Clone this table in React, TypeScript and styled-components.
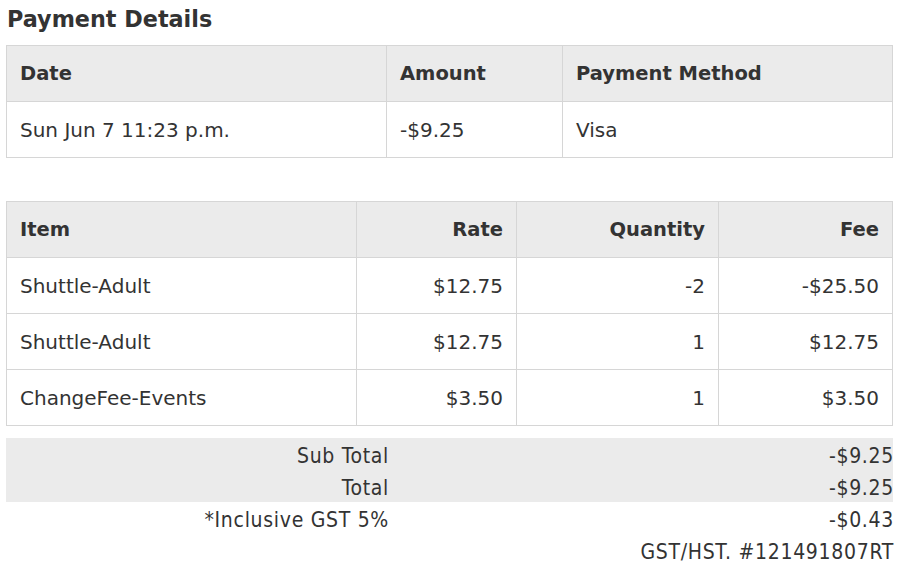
import React from 'react';
import styled, { createGlobalStyle } from 'styled-components';

const GlobalStyle = createGlobalStyle`
  body {
    margin: 0;
    padding: 0 9px 0 6px;
    background: #fff;
    font-family: "DejaVu Sans", Verdana, sans-serif;
    color: #333;
  }
`;

interface LineItem {
  item: string;
  rate: string;
  qty: string;
  fee: string;
}

const items: LineItem[] = [
  { item: 'Shuttle-Adult', rate: '$12.75', qty: '-2', fee: '-$25.50' },
  { item: 'Shuttle-Adult', rate: '$12.75', qty: '1', fee: '$12.75' },
  { item: 'ChangeFee-Events', rate: '$3.50', qty: '1', fee: '$3.50' },
];

const totals = [
  { label: 'Sub Total', value: '-$9.25', shaded: true },
  { label: 'Total', value: '-$9.25', shaded: true },
  { label: '*Inclusive GST 5%', value: '-$0.43', shaded: false },
];

const App: React.FC = () => {
  return (
    <Page>
      <GlobalStyle />
      <Title>Payment Details</Title>
      <Table>
        <colgroup>
          <col style={{ width: 380 }} />
          <col style={{ width: 176 }} />
          <col />
        </colgroup>
        <thead>
          <tr>
            <Th>Date</Th>
            <Th>Amount</Th>
            <Th>Payment Method</Th>
          </tr>
        </thead>
        <tbody>
          <tr>
            <Td>Sun Jun 7 11:23 p.m.</Td>
            <Td>-$9.25</Td>
            <Td>Visa</Td>
          </tr>
        </tbody>
      </Table>

      <ItemsTable>
        <colgroup>
          <col style={{ width: 350 }} />
          <col style={{ width: 160 }} />
          <col style={{ width: 202 }} />
          <col />
        </colgroup>
        <thead>
          <tr>
            <Th>Item</Th>
            <Th $right>Rate</Th>
            <Th $right>Quantity</Th>
            <Th $right>Fee</Th>
          </tr>
        </thead>
        <tbody>
          {items.map((row, i) => (
            <tr key={i}>
              <Td>{row.item}</Td>
              <Td $right>{row.rate}</Td>
              <Td $right>{row.qty}</Td>
              <Td $right>{row.fee}</Td>
            </tr>
          ))}
        </tbody>
      </ItemsTable>

      <Summary>
        {totals.map((t) => (
          <SumRow key={t.label} $shaded={t.shaded}>
            <SumLabel>{t.label}</SumLabel>
            <SumValue>{t.value}</SumValue>
          </SumRow>
        ))}
        <SumRow>
          <SumLabel />
          <SumValue>GST/HST. #121491807RT</SumValue>
        </SumRow>
      </Summary>
    </Page>
  );
};

const Page = styled.div`
  padding-top: 5px;
`;

const Title = styled.h2`
  margin: 0 0 12px 1px;
  font-size: 22.3px;
  font-weight: bold;
  line-height: 28px;
  color: #333;
`;

const Table = styled.table`
  width: 100%;
  border-collapse: collapse;
  table-layout: fixed;
  border: 1px solid #d6d6d6;
`;

const ItemsTable = styled(Table)`
  margin-top: 43px;
`;

const Th = styled.th<{ $right?: boolean }>`
  height: 56px;
  box-sizing: border-box;
  padding: 0 13px;
  background: #ebebeb;
  border: 1px solid #d6d6d6;
  text-align: ${(p) => (p.$right ? 'right' : 'left')};
  font-size: 19.5px;
  font-weight: bold;
  color: #333;
  white-space: nowrap;
`;

const Td = styled.td<{ $right?: boolean }>`
  height: 56px;
  box-sizing: border-box;
  padding: 0 13px;
  border: 1px solid #d6d6d6;
  text-align: ${(p) => (p.$right ? 'right' : 'left')};
  font-size: 20px;
  color: #333;
  white-space: nowrap;
`;

const Summary = styled.div`
  margin-top: 12px;
  font-family: "DejaVu Sans Condensed", "DejaVu Sans", sans-serif;
  font-size: 21px;
  letter-spacing: 0.7px;
  color: #333;
`;

const SumRow = styled.div<{ $shaded?: boolean }>`
  display: grid;
  grid-template-columns: 382px 1fr;
  height: 32px;
  box-sizing: border-box;
  padding-top: 3px;
  align-items: center;
  background: ${(p) => (p.$shaded ? '#ebebeb' : 'transparent')};
`;

const SumLabel = styled.div`
  text-align: right;
  margin-right: -1px;
`;

const SumValue = styled.div`
  text-align: right;
  margin-right: -1px;
`;

export default App;
